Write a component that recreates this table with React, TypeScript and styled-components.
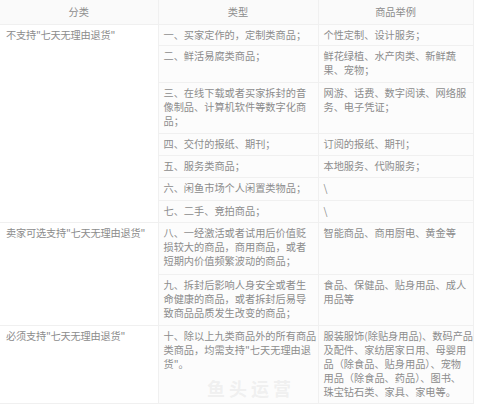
import styled, { createGlobalStyle } from 'styled-components';

const GlobalStyle = createGlobalStyle`
  html, body {
    margin: 0;
    padding: 0;
    background: #ffffff;
  }
  body {
    font-family: "Noto Sans CJK SC", "Noto Sans", sans-serif;
  }
`;

const Page = styled.div`
  position: relative;
  width: 480px;
  height: 405px;
  overflow: hidden;
  background: #ffffff;
`;

const Table = styled.table`
  width: 473px;
  border-collapse: collapse;
  table-layout: fixed;
  font-size: 10.2px;
  line-height: 14px;
  color: #8c8c8c;
`;

const HeadCell = styled.th<{ $first?: boolean }>`
  height: 24px;
  padding: 0;
  font-weight: 400;
  text-align: center;
  background: #fafafa;
  border: 1px solid #f0f0f0;
  border-top: none;
  ${(p) => p.$first && 'border-left: none;'}
`;

const Row = styled.tr<{ $h: number }>`
  height: ${(p) => p.$h}px;
`;

const Cell = styled.td<{ $tint?: boolean }>`
  padding: 3px 5px;
  vertical-align: top;
  border: 1px solid #f0f0f0;
  background: ${(p) => (p.$tint ? '#fcfcfc' : '#ffffff')};
`;

const GroupCell = styled(Cell)`
  padding-top: 3px;
  padding-left: 6px;
  border-left: none;
  white-space: nowrap;
  letter-spacing: -0.2px;
`;

const Line = styled.span`
  display: block;
  white-space: nowrap;
`;

const Watermark = styled.div`
  position: absolute;
  left: 207px;
  top: 375px;
  font-size: 18px;
  letter-spacing: 4px;
  font-weight: 700;
  color: rgba(210, 210, 210, 0.3);
  pointer-events: none;
`;

type Item = {
  type: string[];
  example: string[];
  h: number;
};

type Group = {
  label: string;
  items: Item[];
};

const groups: Group[] = [
  {
    label: '不支持"七天无理由退货"',
    items: [
      { type: ['一、买家定作的，定制类商品；'], example: ['个性定制、设计服务；'], h: 21 },
      { type: ['二、鲜活易腐类商品；'], example: ['鲜花绿植、水产肉类、新鲜蔬', '果、宠物；'], h: 37 },
      {
        type: ['三、在线下载或者买家拆封的音', '像制品、计算机软件等数字化商', '品；'],
        example: ['网游、话费、数字阅读、网络服', '务、电子凭证；'],
        h: 51,
      },
      { type: ['四、交付的报纸、期刊；'], example: ['订阅的报纸、期刊；'], h: 22 },
      { type: ['五、服务类商品；'], example: ['本地服务、代购服务；'], h: 22 },
      { type: ['六、闲鱼市场个人闲置类物品；'], example: ['\\'], h: 23 },
      { type: ['七、二手、竞拍商品；'], example: ['\\'], h: 22 },
    ],
  },
  {
    label: '卖家可选支持"七天无理由退货"',
    items: [
      {
        type: ['八、一经激活或者试用后价值贬', '损较大的商品，商用商品，或者', '短期内价值频繁波动的商品；'],
        example: ['智能商品、商用厨电、黄金等'],
        h: 52,
      },
      {
        type: ['九、拆封后影响人身安全或者生', '命健康的商品，或者拆封后易导', '致商品品质发生改变的商品；'],
        example: ['食品、保健品、贴身用品、成人', '用品等'],
        h: 51,
      },
    ],
  },
  {
    label: '必须支持"七天无理由退货"',
    items: [
      {
        type: ['十、除以上九类商品外的所有商品', '类商品，均需支持"七天无理由退', '货"。'],
        example: [
          '服装服饰(除贴身用品)、数码产品',
          '及配件、家纺居家日用、母婴用',
          '品（除食品、贴身用品）、宠物',
          '用品（除食品、药品）、图书、',
          '珠宝钻石类、家具、家电等。',
        ],
        h: 78,
      },
    ],
  },
];

const Lines = ({ lines }: { lines: string[] }) => (
  <>
    {lines.map((l, i) => (
      <Line key={i}>{l}</Line>
    ))}
  </>
);

const App = () => {
  return (
    <Page>
      <GlobalStyle />
      <Table>
        <colgroup>
          <col style={{ width: 158 }} />
          <col style={{ width: 160 }} />
          <col style={{ width: 155 }} />
        </colgroup>
        <thead>
          <tr>
            <HeadCell $first>分类</HeadCell>
            <HeadCell>类型</HeadCell>
            <HeadCell>商品举例</HeadCell>
          </tr>
        </thead>
        <tbody>
          {groups.map((g) =>
            g.items.map((item, i) => (
              <Row key={g.label + i} $h={item.h}>
                {i === 0 && <GroupCell rowSpan={g.items.length}>{g.label}</GroupCell>}
                <Cell $tint>
                  <Lines lines={item.type} />
                </Cell>
                <Cell $tint>
                  <Lines lines={item.example} />
                </Cell>
              </Row>
            ))
          )}
        </tbody>
      </Table>
      <Watermark>鱼头运营</Watermark>
    </Page>
  );
};

export default App;
